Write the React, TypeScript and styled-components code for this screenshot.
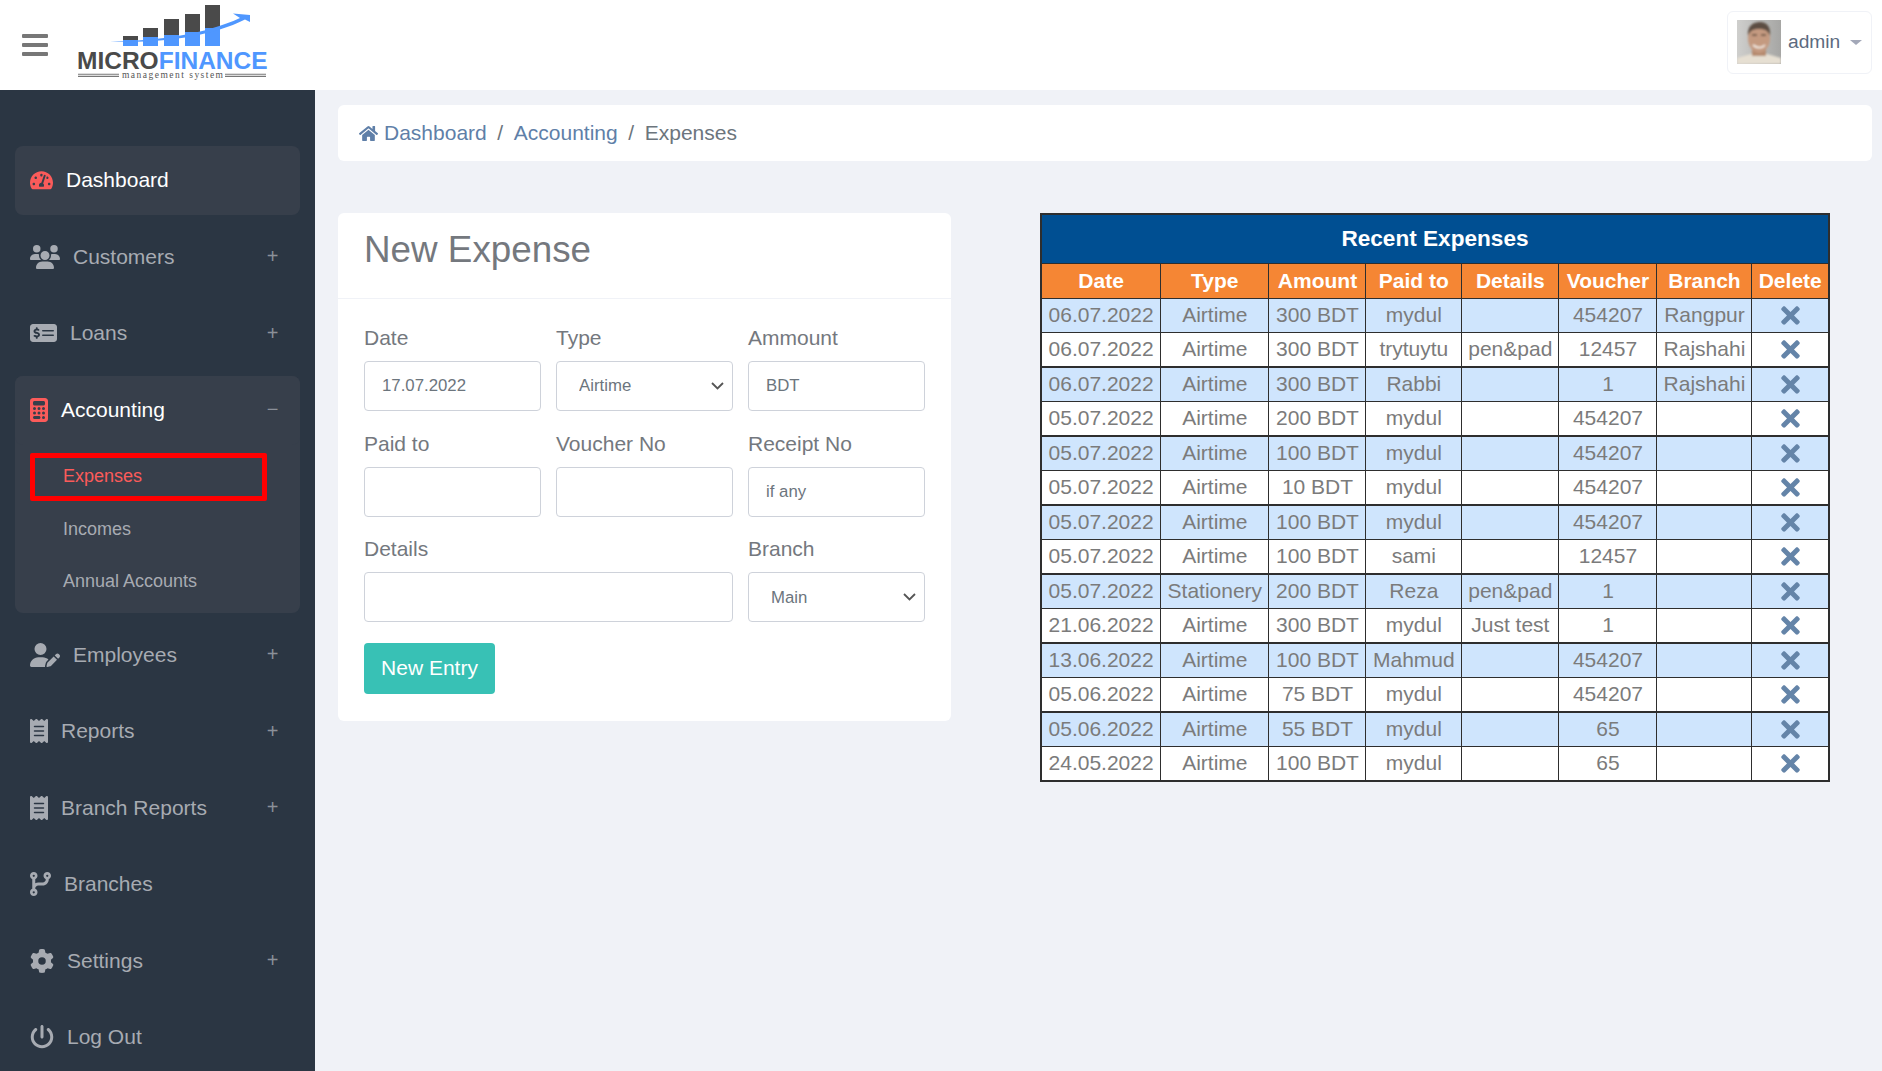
import React from "react";
import styled, { createGlobalStyle } from "styled-components";
import {
  FaCalculator,
  FaCodeBranch,
  FaGear,
  FaMoneyCheckDollar,
  FaPowerOff,
  FaReceipt,
  FaUserPen,
  FaUsers,
} from "react-icons/fa6";
import { FaHome, FaTachometerAlt, FaTimes } from "react-icons/fa";

const chevron =
  "url(\"data:image/svg+xml,%3Csvg xmlns='http://www.w3.org/2000/svg' viewBox='0 0 13 8'%3E%3Cpath d='M1 1l5.5 5.5L12 1' fill='none' stroke='%23555' stroke-width='1.8'/%3E%3C/svg%3E\")";

const GlobalStyle = createGlobalStyle`
  html, body { margin: 0; padding: 0; height: 100%; overflow: hidden; }
  body { font-family: "Liberation Sans", Arial, sans-serif; font-size: 21px; color: #74787e; background: #f0f2f7; }
  * { box-sizing: border-box; }
`;

const Page = styled.div`
  display: flex;
  flex-direction: column;
  height: 100vh;
  overflow: hidden;
`;

const Header = styled.header`
  flex: 0 0 90px;
  display: flex;
  align-items: center;
  padding: 0 10px 0 22px;
  background: #fff;
`;

const Burger = styled.div`
  display: flex;
  flex-direction: column;
  gap: 4.5px;
  width: 26px;
  margin-right: 29px;

  span {
    height: 4.5px;
    background: #777;
    border-radius: 1px;
  }
`;

const UserBox = styled.div`
  display: flex;
  align-items: center;
  height: 63px;
  width: 145px;
  margin: 0 0 6px auto;
  padding: 0 9px;
  border: 1px solid #f0f2f7;
  border-radius: 6px;
  color: #5c6b80;
  font-size: 19.2px;

  svg {
    flex: none;
  }
`;

const UserName = styled.span`
  margin-left: 7px;
`;

const Caret = styled.span`
  flex: none;
  width: 0;
  height: 0;
  margin-left: 10px;
  border-left: 6px solid transparent;
  border-right: 6px solid transparent;
  border-top: 5px solid #a3a8b8;
`;

const Body = styled.div`
  flex: 1;
  display: flex;
  min-height: 0;
`;

const Sidebar = styled.nav`
  flex: 0 0 315px;
  display: flex;
  flex-direction: column;
  gap: 7.5px;
  padding: 56px 15px 0;
  background: #2b3643;
  overflow: hidden;
`;

const NavGroup = styled.div`
  flex: none;
  background: #373f4b;
  border-radius: 8px;
`;

const NavItem = styled.div<{ $active?: boolean; $iconWidth: number; $iconHeight?: number }>`
  flex: 0 0 69px;
  height: 69px;
  display: flex;
  align-items: center;
  gap: 13px;
  padding: 0 21px 1px 15px;
  border-radius: 8px;
  color: ${(p) => (p.$active ? "#fff" : "#a7abb2")};
  background: ${(p) => (p.$active ? "#373f4b" : "transparent")};

  > svg {
    flex: none;
    width: ${(p) => p.$iconWidth}px;
    height: ${(p) => p.$iconHeight ?? 24}px;
    color: ${(p) => (p.$active ? "#fb5b5a" : "#a7abb2")};
  }
`;

const Toggle = styled.span`
  width: 13px;
  margin-left: auto;
  text-align: center;
  font-size: 20px;
  color: #8b9099;
`;

const SubMenu = styled.div`
  padding: 6px 0 5px;
`;

const SubItem = styled.div<{ $current?: boolean }>`
  display: flex;
  align-items: center;
  height: 52.6px;
  padding-left: 48px;
  font-size: 18px;
  color: #a7abb2;

  ${(p) =>
    p.$current &&
    `
    height: 48px;
    width: 237px;
    margin: 2.3px 0 2.3px 15px;
    border: 5px solid #ff0000;
    border-radius: 2px;
    padding-left: 28px;
    color: #fb5b5a;
  `}
`;

const Main = styled.main`
  flex: 1;
  min-width: 0;
  padding: 15px 10px 0 23px;
`;

const Breadcrumb = styled.div`
  display: flex;
  align-items: center;
  height: 56px;
  padding-left: 21px;
  background: #fff;
  border-radius: 6px;
  color: #6c757d;

  svg {
    width: 19px;
    height: 19px;
    color: #5f7fa8;
    margin-right: 6px;
  }
`;

const CrumbLink = styled.span`
  color: #5f7fa8;
`;

const CrumbSep = styled.span`
  margin: 0 10.6px;
  color: #6c757d;
`;

const Content = styled.div`
  display: flex;
  align-items: flex-start;
  gap: 89px;
  margin-top: 51.8px;
`;

const Card = styled.section`
  flex: 0 0 612px;
  background: #fff;
  border-radius: 6px;
`;

const CardHead = styled.div`
  display: flex;
  align-items: center;
  height: 86.2px;
  padding: 0 26px;
  border-bottom: 1px solid #f0f2f7;
`;

const CardTitle = styled.h2`
  margin: 0 0 10px;
  font-size: 36.8px;
  font-weight: 400;
  color: #74787e;
`;

const Form = styled.form`
  display: grid;
  grid-template-columns: repeat(3, 177px);
  column-gap: 15px;
  row-gap: 20.6px;
  padding: 27px 26px 27.4px;
`;

const Field = styled.label<{ $span?: number }>`
  display: block;
  grid-column: span ${(p) => p.$span ?? 1};
`;

const FieldName = styled.span`
  display: block;
  height: 24px;
  line-height: 24px;
  margin-bottom: 11px;
  color: #74787e;
`;

const Input = styled.input`
  display: block;
  width: 100%;
  height: 50px;
  padding: 0 17px;
  border: 1px solid #ced2da;
  border-radius: 4px;
  background: #fff;
  font: 16.8px "Liberation Sans", Arial, sans-serif;
  color: #6c757d;
  outline: none;

  &::placeholder {
    color: #6c757d;
    opacity: 1;
  }
`;

const Select = styled.select`
  display: block;
  width: 100%;
  height: 50px;
  padding: 0 0 0 22px;
  border: 1px solid #ced2da;
  border-radius: 4px;
  appearance: none;
  background: #fff ${chevron} no-repeat right 8px center / 13px 8px;
  font: 16.8px "Liberation Sans", Arial, sans-serif;
  color: #6c757d;
  outline: none;
`;

const SubmitButton = styled.button`
  grid-column: 1 / -1;
  width: 131px;
  height: 51px;
  padding: 0;
  border: 0;
  border-radius: 4px;
  background: #38c1b5;
  color: #fff;
  font: 21px "Liberation Sans", Arial, sans-serif;
`;

const Table = styled.table`
  flex: 0 0 788px;
  width: 788px;
  table-layout: fixed;
  border-collapse: collapse;
  border: 2px solid #2e2e2e;
  text-align: center;
  color: #7b7b7b;
`;

const Col = styled.col<{ $width: number }>`
  width: ${(p) => p.$width}px;
`;

const TitleCell = styled.th`
  height: 50px;
  padding: 0;
  background: #004f92;
  color: #fff;
  font-size: 22.6px;
  font-weight: 700;
  border: 1px solid #2e2e2e;
`;

const HeadCell = styled.th`
  height: 34.5px;
  padding: 0;
  background: #f58634;
  color: #fff;
  font-size: 21px;
  font-weight: 700;
  border: 1px solid #2e2e2e;
`;

const Row = styled.tr`
  background: #fff;

  &:nth-child(odd) {
    background: #cfe5fd;
  }

  &:nth-child(even) td {
    border-bottom-width: 2px;
  }
`;

const Cell = styled.td`
  height: 34.5px;
  padding: 0 0 2px;
  border: 1px solid #2e2e2e;
  white-space: nowrap;
`;

const DeleteIcon = styled(FaTimes)`
  display: block;
  margin: 2px auto 0;
  font-size: 27px;
  color: #6484a8;
`;

const Logo = () => (
  <svg width="196" height="90" viewBox="77 0 196 90">
    {[
      [123, 36, 40],
      [143, 28, 37],
      [164, 19, 35],
      [185, 14, 32],
      [205, 5, 28],
    ].map(([x, top, split]) => (
      <g key={x}>
        <rect x={x} y={top} width="15" height={split - top} fill="#4a4a4a" />
        <rect x={x} y={split} width="15" height={46 - split} fill="#4f97ff" />
      </g>
    ))}
    <path
      d="M110 41.5 C160 41 205 34 240 18 L233 13.5 L250 15 L250 22 L245 19.5 C210 37 160 43.5 110 41.5 Z"
      fill="#4f97ff"
    />
    <text x="77" y="69" fontFamily="Liberation Sans" fontWeight="700" fontSize="24.5" fill="#4a4a4a">
      MICRO
    </text>
    <text x="158.7" y="69" fontFamily="Liberation Sans" fontWeight="700" fontSize="24.5" fill="#4f97ff">
      FINANCE
    </text>
    <text x="122" y="78" fontFamily="Liberation Serif" fontSize="9.5" fill="#555" textLength="101">
      management system
    </text>
    <path d="M78 74.2H119M78 76.4H119M225 74.2H266M225 76.4H266" stroke="#777" strokeWidth="1.1" />
  </svg>
);

const Avatar = () => (
  <svg width="44" height="44" viewBox="0 0 44 44">
    <defs>
      <linearGradient id="avatarBg" x1="0" y1="0" x2="1" y2="0">
        <stop offset="0" stopColor="#cfcfcd" />
        <stop offset="1" stopColor="#a6a6a4" />
      </linearGradient>
      <filter id="soft">
        <feGaussianBlur stdDeviation="0.9" />
      </filter>
    </defs>
    <rect width="44" height="44" fill="url(#avatarBg)" />
    <g filter="url(#soft)">
      <path d="M0 44V38L14 34H30L44 38V44Z" fill="#e6dfd2" />
      <rect x="15" y="26" width="14" height="10" fill="#b58a6e" />
      <ellipse cx="22" cy="18" rx="11" ry="15" fill="#c49a80" />
      <path d="M11 16C10 5 17 2 23 2C30 2 34 7 33 16C31 10 27 9 22 9C17 9 13 10 11 16Z" fill="#5c4d42" />
      <path d="M15 15H20M24 15H29" stroke="#5a473b" strokeWidth="1.4" />
      <path d="M16 25C20 28.5 25 28.5 28 25" stroke="#f4ece4" strokeWidth="1.8" fill="none" />
    </g>
  </svg>
);

const navBefore = [
  { icon: <FaUsers />, label: "Customers", iconWidth: 30, more: true },
  { icon: <FaMoneyCheckDollar />, label: "Loans", iconWidth: 27, more: true },
];

const navAfter = [
  { icon: <FaUserPen />, label: "Employees", iconWidth: 30, more: true },
  { icon: <FaReceipt />, label: "Reports", iconWidth: 18, more: true },
  { icon: <FaReceipt />, label: "Branch Reports", iconWidth: 18, more: true },
  { icon: <FaCodeBranch />, label: "Branches", iconWidth: 21, more: false },
  { icon: <FaGear />, label: "Settings", iconWidth: 24, more: true },
  { icon: <FaPowerOff />, label: "Log Out", iconWidth: 24, more: false },
];

const columns = [
  { label: "Date", width: 119.7 },
  { label: "Type", width: 108.3 },
  { label: "Amount", width: 97 },
  { label: "Paid to", width: 95.7 },
  { label: "Details", width: 97.3 },
  { label: "Voucher", width: 98 },
  { label: "Branch", width: 95 },
  { label: "Delete", width: 77 },
];

const expenses = [
  ["06.07.2022", "Airtime", "300 BDT", "mydul", "", "454207", "Rangpur"],
  ["06.07.2022", "Airtime", "300 BDT", "trytuytu", "pen&pad", "12457", "Rajshahi"],
  ["06.07.2022", "Airtime", "300 BDT", "Rabbi", "", "1", "Rajshahi"],
  ["05.07.2022", "Airtime", "200 BDT", "mydul", "", "454207", ""],
  ["05.07.2022", "Airtime", "100 BDT", "mydul", "", "454207", ""],
  ["05.07.2022", "Airtime", "10 BDT", "mydul", "", "454207", ""],
  ["05.07.2022", "Airtime", "100 BDT", "mydul", "", "454207", ""],
  ["05.07.2022", "Airtime", "100 BDT", "sami", "", "12457", ""],
  ["05.07.2022", "Stationery", "200 BDT", "Reza", "pen&pad", "1", ""],
  ["21.06.2022", "Airtime", "300 BDT", "mydul", "Just test", "1", ""],
  ["13.06.2022", "Airtime", "100 BDT", "Mahmud", "", "454207", ""],
  ["05.06.2022", "Airtime", "75 BDT", "mydul", "", "454207", ""],
  ["05.06.2022", "Airtime", "55 BDT", "mydul", "", "65", ""],
  ["24.05.2022", "Airtime", "100 BDT", "mydul", "", "65", ""],
];

const App = () => (
  <Page>
    <GlobalStyle />
    <Header>
      <Burger>
        <span />
        <span />
        <span />
      </Burger>
      <Logo />
      <UserBox>
        <Avatar />
        <UserName>admin</UserName>
        <Caret />
      </UserBox>
    </Header>
    <Body>
      <Sidebar>
        <NavItem $active $iconWidth={23} $iconHeight={20.5}>
          <FaTachometerAlt />
          Dashboard
        </NavItem>
        {navBefore.map((item) => (
          <NavItem key={item.label} $iconWidth={item.iconWidth}>
            {item.icon}
            {item.label}
            <Toggle>+</Toggle>
          </NavItem>
        ))}
        <NavGroup>
          <NavItem $active $iconWidth={18}>
            <FaCalculator />
            Accounting
            <Toggle>−</Toggle>
          </NavItem>
          <SubMenu>
            <SubItem $current>Expenses</SubItem>
            <SubItem>Incomes</SubItem>
            <SubItem>Annual Accounts</SubItem>
          </SubMenu>
        </NavGroup>
        {navAfter.map((item) => (
          <NavItem key={item.label} $iconWidth={item.iconWidth}>
            {item.icon}
            {item.label}
            {item.more && <Toggle>+</Toggle>}
          </NavItem>
        ))}
      </Sidebar>
      <Main>
        <Breadcrumb>
          <FaHome />
          <CrumbLink>Dashboard</CrumbLink>
          <CrumbSep>/</CrumbSep>
          <CrumbLink>Accounting</CrumbLink>
          <CrumbSep>/</CrumbSep>
          Expenses
        </Breadcrumb>
        <Content>
          <Card>
            <CardHead>
              <CardTitle>New Expense</CardTitle>
            </CardHead>
            <Form>
              <Field>
                <FieldName>Date</FieldName>
                <Input defaultValue="17.07.2022" />
              </Field>
              <Field>
                <FieldName>Type</FieldName>
                <Select defaultValue="Airtime">
                  <option>Airtime</option>
                  <option>Stationery</option>
                </Select>
              </Field>
              <Field>
                <FieldName>Ammount</FieldName>
                <Input placeholder="BDT" />
              </Field>
              <Field>
                <FieldName>Paid to</FieldName>
                <Input />
              </Field>
              <Field>
                <FieldName>Voucher No</FieldName>
                <Input />
              </Field>
              <Field>
                <FieldName>Receipt No</FieldName>
                <Input placeholder="if any" />
              </Field>
              <Field $span={2}>
                <FieldName>Details</FieldName>
                <Input />
              </Field>
              <Field>
                <FieldName>Branch</FieldName>
                <Select defaultValue="Main">
                  <option>Main</option>
                  <option>Rangpur</option>
                  <option>Rajshahi</option>
                </Select>
              </Field>
              <SubmitButton type="button">New Entry</SubmitButton>
            </Form>
          </Card>
          <Table>
            <colgroup>
              {columns.map((col) => (
                <Col key={col.label} $width={col.width} />
              ))}
            </colgroup>
            <thead>
              <tr>
                <TitleCell colSpan={8}>Recent Expenses</TitleCell>
              </tr>
              <tr>
                {columns.map((col) => (
                  <HeadCell key={col.label}>{col.label}</HeadCell>
                ))}
              </tr>
            </thead>
            <tbody>
              {expenses.map((row, key) => (
                <Row key={key}>
                  {row.map((value, index) => (
                    <Cell key={index}>{value}</Cell>
                  ))}
                  <Cell>
                    <DeleteIcon />
                  </Cell>
                </Row>
              ))}
            </tbody>
          </Table>
        </Content>
      </Main>
    </Body>
  </Page>
);

export default App;
